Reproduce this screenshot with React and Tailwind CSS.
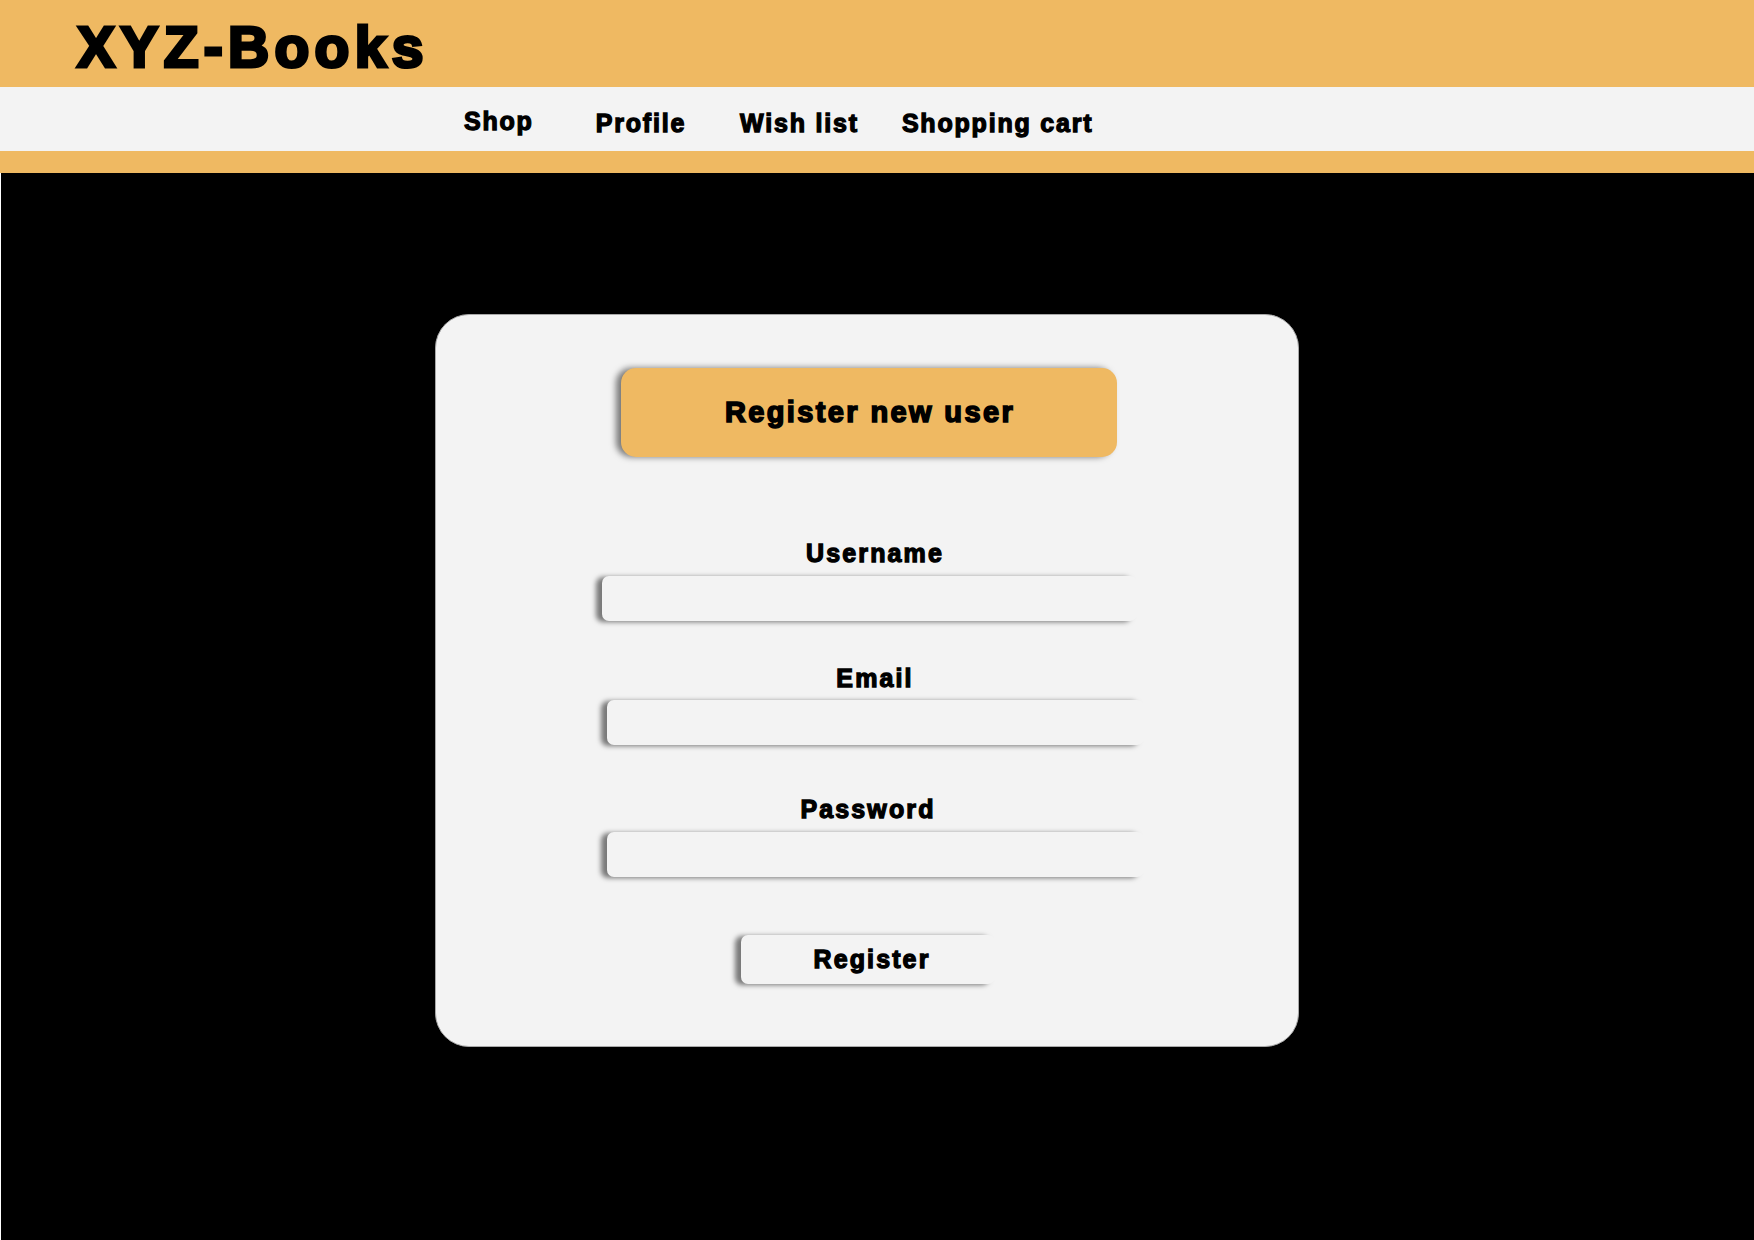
import React from "react";

const F = { fontFamily: '"Liberation Sans", Arial, sans-serif' };

export default function App() {
  return (
    <div className="min-h-[1240px] w-[1754px] bg-white flex flex-col" style={F}>
      <header className="h-[87px] bg-[#efb962] pl-[77px] pt-[19px]">
        <h1 className="text-[57px] leading-none font-bold tracking-[0.093em] text-black [-webkit-text-stroke:3.2px_black]">
          XYZ-Books
        </h1>
      </header>
      <nav className="h-[64px] bg-[#f3f3f3] flex items-start pt-[20px] pl-[464px] text-[25px] leading-[28px] font-bold tracking-[0.072em] text-black [-webkit-text-stroke:1.3px_black]">
        <a>Shop</a>
        <a className="ml-[62px] mt-[2px]">Profile</a>
        <a className="ml-[54px] mt-[2px]">Wish list</a>
        <a className="ml-[43px] mt-[2px]">Shopping cart</a>
      </nav>
      <div className="h-[22px] bg-[#efb962]" />
      <main className="flex-1 bg-black ml-px flex justify-start pt-[141px] pb-[193px]">
        <div className="ml-[434px] w-[864px] h-[733px] bg-[#f3f3f3] border border-[#a8a8a8] rounded-[34px] flex flex-col items-center pt-[53px]">
          <div className="ml-[4px] w-[496px] h-[89px] rounded-[15px] bg-[#efb962] shadow-[-5px_0px_6px_rgba(0,0,0,0.5)] flex items-center justify-center">
            <span className="ml-[2px] text-[29px] leading-none font-bold tracking-[0.082em] [-webkit-text-stroke:1.6px_black] text-black">
              Register new user
            </span>
          </div>

          <label className="mt-[82px] ml-[16px] text-[25px] leading-[28px] font-bold tracking-[0.085em] [-webkit-text-stroke:1.3px_black] text-black">
            Username
          </label>
          <div className="mt-[9px] ml-[5px] w-[535px] h-[45px] rounded-[7px] bg-[#f3f3f3] shadow-[-6px_1px_5px_rgba(0,0,0,0.5)]" />

          <label className="mt-[43px] ml-[16px] text-[25px] leading-[28px] font-bold tracking-[0.085em] [-webkit-text-stroke:1.3px_black] text-black">
            Email
          </label>
          <div className="mt-[8px] ml-[16px] w-[537px] h-[45px] rounded-[7px] bg-[#f3f3f3] shadow-[-6px_1px_5px_rgba(0,0,0,0.5)]" />

          <label className="mt-[50px] ml-[2px] text-[25px] leading-[28px] font-bold tracking-[0.085em] [-webkit-text-stroke:1.3px_black] text-black">
            Password
          </label>
          <div className="mt-[9px] ml-[16px] w-[537px] h-[45px] rounded-[7px] bg-[#f3f3f3] shadow-[-6px_1px_5px_rgba(0,0,0,0.5)]" />

          <button className="mt-[58px] ml-[2px] w-[254px] h-[49px] rounded-[7px] bg-[#f3f3f3] shadow-[-6px_1px_5px_rgba(0,0,0,0.5)] flex items-center justify-center pl-[8px]">
            <span className="text-[25px] leading-none font-bold tracking-[0.085em] [-webkit-text-stroke:1.3px_black] text-black">
              Register
            </span>
          </button>
        </div>
      </main>
    </div>
  );
}
